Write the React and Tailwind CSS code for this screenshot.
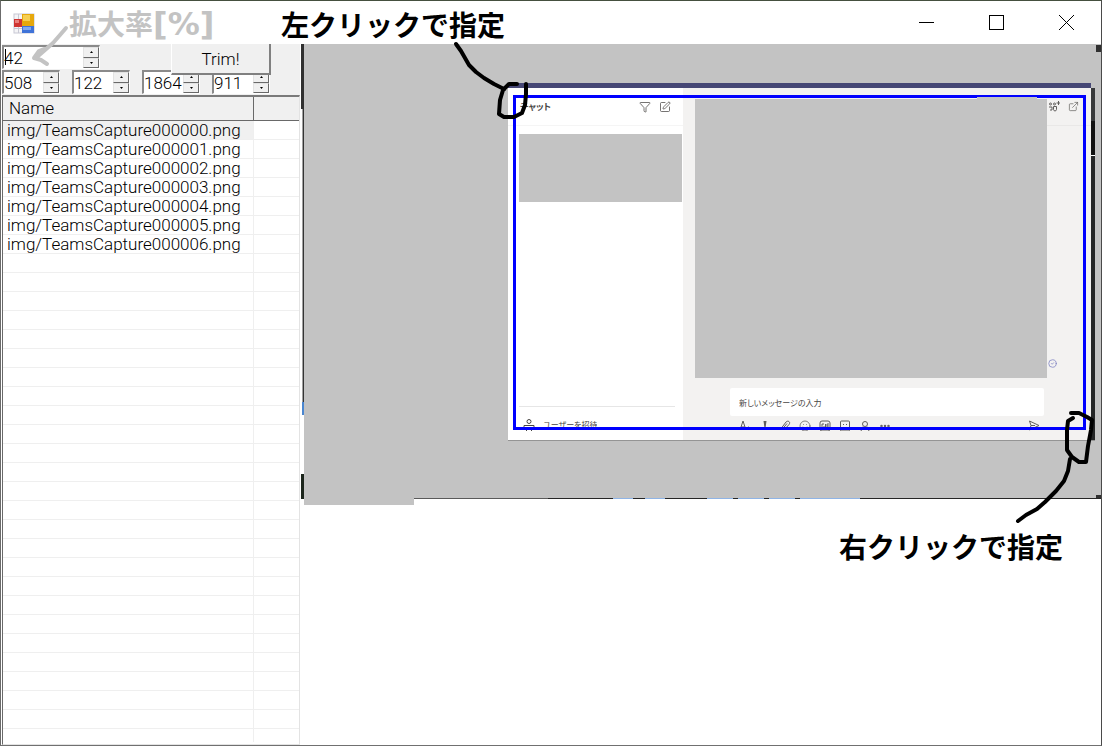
import React, { useState } from "react";
import {
  Filter,
  SquarePen,
  ExternalLink,
  Smile,
  Ellipsis,
  CircleCheck,
} from "lucide-react";

const files = [0, 1, 2, 3, 4, 5, 6].map((n) => `img/TeamsCapture00000${n}.png`);
const emptyRows = Array.from({ length: 25 });

function AppIcon() {
  return (
    <svg width="22" height="22" viewBox="0 0 22 22" aria-hidden="true">
      <rect x="1" y="1" width="20" height="19" fill="#f4f4f6" stroke="#c8c8d4" />
      <path d="M5.500 1v19M1 15.500h8" stroke="#c8c8d4" />
      <rect x="9" y="1" width="12" height="12" fill="#e6a80c" />
      <rect x="10" y="2" width="7" height="6" fill="#f6cf52" />
      <rect x="1" y="6" width="8" height="8" fill="#cf3432" />
      <rect x="2" y="7" width="4" height="3" fill="#e8807c" />
      <rect x="9" y="13" width="12" height="7" fill="#3f73d8" />
      <rect x="10" y="14" width="8" height="3" fill="#7fa9f0" />
    </svg>
  );
}

function TitleBar() {
  return (
    <header className="flex h-[43px] bg-white pl-3">
      <div className="flex flex-1 items-center pt-[2px]">
        <AppIcon />
        <span className="ml-[34px] w-[212px] text-[28px] leading-8 font-bold whitespace-nowrap text-[#c3c3c3]">
          拡大率<span className="font-['DejaVu_Sans',sans-serif] text-[32px]">[%]</span>
        </span>
        <span className="text-[28px] leading-8 font-bold">左クリックで指定</span>
      </div>
      <div className="flex">
        <button aria-label="Minimize" className="flex w-[70px] items-center justify-center">
          <svg width="15" height="15" fill="none" stroke="black">
            <path d="M0 7.500h15" />
          </svg>
        </button>
        <button aria-label="Maximize" className="flex w-[70px] items-center justify-center">
          <svg width="15" height="15" fill="none" stroke="black">
            <rect x="0.500" y="0.500" width="14" height="14" />
          </svg>
        </button>
        <button aria-label="Close" className="flex w-[70px] items-center justify-center">
          <svg width="15" height="15" fill="none" stroke="black">
            <path d="M0 0l15 15M15 0L0 15" />
          </svg>
        </button>
      </div>
    </header>
  );
}

function NumericUpDown({ label, initial, className }) {
  const [value, setValue] = useState(initial);

  return (
    <div
      className={`flex h-6 border-t-2 border-l-2 border-r border-b border-t-[#8a8a8a] border-l-[#8a8a8a] border-r-white border-b-white bg-white ${className}`}
    >
      <input
        aria-label={label}
        inputMode="numeric"
        value={value}
        onChange={(e) => setValue(Number(e.target.value) || 0)}
        className="w-0 min-w-0 flex-1 text-[17px] leading-5 outline-none"
      />
      <div className="flex w-4 flex-col">
        <button
          aria-label={`${label} up`}
          onClick={() => setValue(value + 1)}
          className="flex flex-1 items-center justify-center border border-t-[#e3e3e3] border-r-[#696969] border-b-[#696969] border-l-[#e3e3e3] bg-[#f0f0f0]"
        >
          <svg width="3" height="2">
            <path d="M0 2L1.500 0L3 2z" />
          </svg>
        </button>
        <button
          aria-label={`${label} down`}
          onClick={() => setValue(value - 1)}
          className="flex flex-1 items-center justify-center border border-t-[#e3e3e3] border-r-[#696969] border-b-[#696969] border-l-[#e3e3e3] bg-[#f0f0f0]"
        >
          <svg width="3" height="2">
            <path d="M0 0L1.500 2L3 0z" />
          </svg>
        </button>
      </div>
    </div>
  );
}

function FileList() {
  return (
    <div className="flex-1 border-t-2 border-r border-b border-l border-t-[#7a7a7a] border-r-[#e3e3e3] border-b-[#e3e3e3] border-l-[#696969] bg-white">
      <table className="w-full table-fixed border-collapse text-[17px]">
        <thead>
          <tr className="h-[23px] bg-[#f0f0f0]">
            <th className="w-[250px] border-r border-b border-[#696969] p-0 pl-[6px] text-left leading-5 font-light">
              Name
            </th>
            <th className="border-b border-[#696969] p-0" aria-label="Empty column" />
          </tr>
        </thead>
        <tbody>
          {files.map((name, i) => (
            <tr key={name} className="h-[19px] border-b border-[#efefef]">
              <td
                className={`border-r border-[#efefef] p-0 pl-1 leading-[18px] ${
                  i === 0 ? "bg-[#f0f0f0]" : ""
                }`}
              >
                {name}
              </td>
              <td className="p-0" />
            </tr>
          ))}
          {emptyRows.map((_, i) => (
            <tr key={i} className="h-[19px] border-b border-[#efefef]">
              <td className="border-r border-[#efefef] p-0" />
              <td className="p-0" />
            </tr>
          ))}
          <tr className="h-[14px]">
            <td className="border-r border-[#efefef] p-0" />
            <td className="p-0" />
          </tr>
        </tbody>
      </table>
    </div>
  );
}

function SidePanel() {
  return (
    <aside className="flex w-[298px] shrink-0 flex-col bg-[#f0f0f0] font-['Roboto',sans-serif] font-light">
      <div className="relative z-10 flex h-[26px] items-start">
        <div className="relative pt-px">
          <NumericUpDown label="拡大率" initial={42} className="w-[98px]" />
          <span className="absolute top-[5px] left-[3px] h-4 w-px bg-black" />
        </div>
        <button className="ml-[71px] h-[31px] w-[100px] border-r-2 border-b-2 border-l border-l-white border-r-[#808080] border-b-[#808080] bg-[#f0f0f0] text-[17px] leading-5">
          Trim!
        </button>
      </div>
      <div className="flex h-[25px] gap-3">
        <NumericUpDown label="左" initial={508} className="w-[58px]" />
        <NumericUpDown label="上" initial={122} className="w-[58px]" />
        <NumericUpDown label="右" initial={1864} className="w-[58px]" />
        <NumericUpDown label="下" initial={911} className="w-[58px]" />
      </div>
      <FileList />
    </aside>
  );
}

function ChatSidebar() {
  return (
    <div className="flex w-[175px] shrink-0 flex-col bg-white text-[#484644]">
      <div className="flex h-[38px] items-center border-b border-[#f5f5f5] pr-3 pl-3">
        <span className="flex-1 text-[9px] leading-3 font-bold">チャット</span>
        <Filter size={12} strokeWidth={1.5} className="mr-2" />
        <SquarePen size={12} strokeWidth={1.5} />
      </div>
      <div className="mt-2 ml-[11px] h-[68px] w-[163px] bg-[#c3c3c3]" />
      <div className="flex-1" />
      <div className="mr-2 ml-[11px] flex h-[34px] items-start border-t border-[#e6e6e6] pt-3 pl-1">
        <div className="flex h-3 items-start gap-2 overflow-hidden">
          <svg width="12" height="12" fill="none" stroke="currentColor">
            <circle cx="6" cy="2.500" r="2" />
            <path d="M1 6.500h10M1 6.500v3M11 6.500v3M3.500 12V9h5v3" />
          </svg>
          <span className="text-[8px] leading-3">ユーザーを招待</span>
        </div>
      </div>
    </div>
  );
}

function ComposeTools() {
  return (
    <div className="mt-1 mr-[47px] ml-[56px] flex h-[11px] items-start gap-2 overflow-hidden text-[#605e5c]">
      <svg width="12" height="12" fill="none" stroke="currentColor">
        <path d="M1 10L4 1L7 10M2 7h4M8 10c0-4 3-4 3 0" />
      </svg>
      <svg width="12" height="12" fill="currentColor">
        <path d="M4.500 1h3L6.500 8h-1z" />
      </svg>
      <svg width="12" height="12" fill="none" stroke="currentColor">
        <path d="M1 10L7 2C9 0 12 2 10 4.500L5 10M8 3.500L3.500 9" />
      </svg>
      <Smile size={12} strokeWidth={1.5} />
      <svg width="12" height="12" fill="none" stroke="currentColor">
        <rect x="1" y="1" width="10" height="10" rx="2" />
        <path d="M5 4H3v4h2V6M6.500 4v4M8 8V4h2M8 6h2" />
      </svg>
      <svg width="12" height="12" fill="none" stroke="currentColor">
        <rect x="1.500" y="1" width="9" height="10" rx="1" />
        <path d="M4 4.500h1M7 4.500h1M4 7c1 1.500 3 1.500 4 0" />
      </svg>
      <svg width="12" height="12" fill="none" stroke="currentColor">
        <circle cx="6" cy="4" r="2.500" />
        <path d="M4 6.500L2 11M8 6.500L10 11" />
      </svg>
      <Ellipsis size={12} strokeWidth={3} />
      <span className="flex-1" />
      <svg width="12" height="12" fill="none" stroke="currentColor" className="mr-1">
        <path d="M1.500 1L11 5.500L1.500 10L3 5.500zM3 5.500h4" />
      </svg>
    </div>
  );
}

function ChatMain() {
  return (
    <div className="flex min-w-0 flex-1 flex-col bg-[#f3f2f1]">
      <div className="flex h-[290px] pl-3">
        <div className="mt-[11px] flex-1 bg-[#c3c3c3]" />
        <div className="flex w-11 flex-col">
          <div className="flex h-[38px] items-center gap-2 border-b border-[#e9e8e7] pl-[2px] text-[#605e5c]">
            <svg width="11" height="11" fill="none" stroke="currentColor">
              <circle cx="1.500" cy="3" r="1" />
              <circle cx="5.500" cy="3" r="1" />
              <path d="M0 6h3v3H1M4.500 5.500h3v3l-1 1.500h-1l-1-1.500z" />
              <path d="M9.500 0v4M7.500 2h4" />
            </svg>
            <ExternalLink size={11} strokeWidth={1.5} />
          </div>
          <div className="flex-1" />
          <CircleCheck size={9} className="mb-[10px] ml-px text-[#7b7fc0]" />
        </div>
      </div>
      <input
        aria-label="新しいメッセージの入力"
        placeholder="新しいメッセージの入力"
        className="mt-[10px] mr-[47px] ml-[47px] h-7 min-w-0 rounded-[2px] bg-white pl-[9px] text-[8px] placeholder:text-[#484644]"
      />
      <ComposeTools />
    </div>
  );
}

// Screen capture with the trim rectangle drawn over it
function Capture() {
  return (
    <div className="relative h-[454px] bg-[#c3c3c3] pt-[39px] pr-[6px] pl-[204px]">
      <div className="relative flex h-[358px] flex-col border-b border-[#949494] [font-feature-settings:'palt']">
        <div className="mr-1 h-[5px] bg-[#464775]" />
        <div className="flex flex-1">
          <ChatSidebar />
          <ChatMain />
          <div className="flex w-1 flex-col bg-[#252627]">
            <div className="h-[33px] bg-[#38393b]" />
            <div className="h-[35px] border-b border-white bg-[#111111]" />
          </div>
        </div>
        <div className="absolute top-[12px] right-[9px] bottom-[10px] left-[5px] border-[3px] border-[#0000ff]" />
        <div className="absolute top-[14px] right-[58px] h-[3px] w-[60px] bg-[#c3c3c3]" />
      </div>
      <div className="absolute top-px right-0 h-[7px] w-[5px] bg-[#303030]" />
      <div className="absolute right-0 bottom-0 h-[3px] w-[5px] bg-[#303030]" />
    </div>
  );
}

function Viewer() {
  return (
    <main className="flex min-w-0 flex-1 bg-white pl-px">
      <div className="flex w-[3px] shrink-0 flex-col">
        <div className="h-[65px] bg-[#303030]" />
        <div className="ml-px h-[293px] border-l border-r border-l-[#a0a0a0] border-r-[#333333]" />
        <div className="ml-px h-[13px] bg-[#4a86d0]" />
        <div className="h-[59px]" />
        <div className="h-[25px] bg-[#1c261c]" />
      </div>
      <div className="min-w-0 flex-1">
        <Capture />
        <div className="flex h-[7px]">
          <div className="w-[110px] bg-[#c3c3c3]" />
          <div className="flex h-px flex-1 bg-[#262626]">
            <span className="w-[134px] bg-[#5a5a5a]" />
            <span className="ml-[65px] w-5 bg-[#8fb4e6]" />
            <span className="ml-3 w-5 bg-[#8fb4e6]" />
            <span className="ml-[42px] w-[26px] bg-[#8fb4e6]" />
            <span className="ml-[5px] w-[26px] bg-[#8fb4e6]" />
            <span className="ml-[5px] w-[26px] bg-[#8fb4e6]" />
            <span className="ml-[5px] w-[60px] bg-[#8fb4e6]" />
          </div>
        </div>
        <div className="flex justify-end pt-[25px] pr-[38px]">
          <span className="text-[28px] leading-8 font-bold">右クリックで指定</span>
        </div>
      </div>
    </main>
  );
}

// Pen strokes that point at the fields and corners
function PenMarks() {
  return (
    <div className="pointer-events-none">
      <svg className="absolute top-[22px] left-[28px] z-20" width="42" height="46" fill="none" stroke="#c3c3c3" strokeWidth="4" strokeLinecap="round" strokeLinejoin="round">
        <path d="M37 5L31 12L24 20L16 27L8 34M15 26L10 28L5 35L12 37L18 41M8 34L12 29" />
      </svg>
      <svg className="absolute top-[39px] left-[449px] z-20" width="85" height="82" fill="none" stroke="black" strokeWidth="4" strokeLinecap="round" strokeLinejoin="round">
        <path d="M6 4L11 11L15 18L19 25L26 32L34 38L44 44L54 49" />
        <path d="M67 44H59L53 50L50 60L49 74L54 77L64 77L72 73L75 65L76 54V44" />
      </svg>
      <svg className="absolute top-[403px] right-[2px] z-20" width="88" height="122" fill="none" stroke="black" strokeWidth="4" strokeLinecap="round" strokeLinejoin="round">
        <path d="M60 9L68 9L76 13L81 16L80 26L77 42L75 58L68 58L61 53L56 46L56 26L57 17L62 14" />
        <path d="M59 55L57 67L53 77L45 87L34 98L26 105L15 111L7 117" />
      </svg>
    </div>
  );
}

function App() {
  return (
    <div className="relative flex min-h-screen flex-col border-t border-r border-b border-l border-t-[#45503f] border-r-[#4a4a4a] border-b-[#707070] border-l-[#6b6b6b] bg-white font-['Noto_Sans_CJK_JP',sans-serif] text-black">
      <TitleBar />
      <div className="flex flex-1 pl-px">
        <SidePanel />
        <Viewer />
      </div>
      <PenMarks />
    </div>
  );
}

export default App;
